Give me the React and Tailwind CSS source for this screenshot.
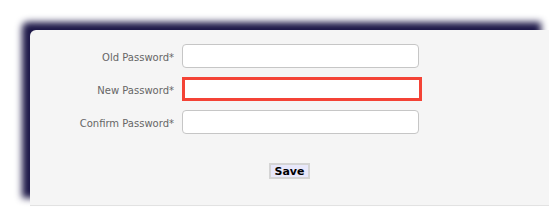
export default function App() {
  const rows = [
    { label: 'Old Password*', error: false },
    { label: 'New Password*', error: true },
    { label: 'Confirm Password*', error: false },
  ];

  return (
    <div className="w-[549px] h-[207px] bg-white pl-[30px] pt-[30px] overflow-hidden" style={{ fontFamily: '"DejaVu Sans", Verdana, sans-serif' }}>
      <div className="w-[519px] h-[176px] bg-[#f5f5f5] border-b border-[#e2e2e2] shadow-[-8px_-8px_7px_#1d1848] rounded-tl-[6px]">
        <div className="flex flex-col gap-[9px] pt-[14px]">
          {rows.map((r) => (
            <div key={r.label} className="flex items-center h-[24px]">
              <label className="w-[152px] text-right text-[10px] text-[#666] pr-[8px] pt-[2px]">{r.label}</label>
              {r.error ? (
                <input className="w-[240px] h-[24px] bg-white border-[3px] border-[#f44336] outline-none" />
              ) : (
                <input className="w-[237px] h-[24px] bg-white border border-[#c6c6c6] rounded-[4px] outline-none" />
              )}
            </div>
          ))}
        </div>
        <div className="flex justify-center mt-[29px]">
          <button className="h-[16px] px-[4px] bg-[#e8e8fb] border-2 border-[#d4d4d4] text-[11px] font-bold text-black leading-none">
            Save
          </button>
        </div>
      </div>
    </div>
  );
}
